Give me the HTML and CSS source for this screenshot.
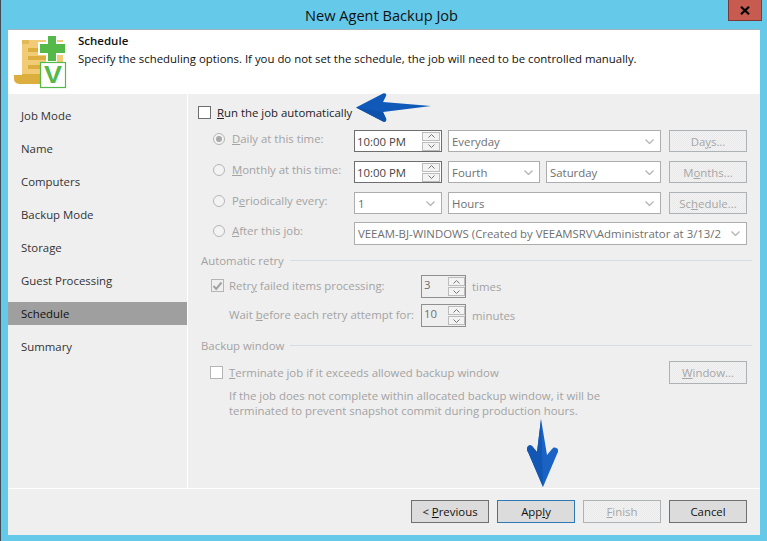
FILE: index.html
```html
<!DOCTYPE html>
<html lang="en">
<head>
<meta charset="utf-8">
<title>New Agent Backup Job</title>
<link rel="stylesheet" href="styles.css">
</head>
<body>
<div class="app">
  <div class="titlebar">
    <span class="title">New Agent Backup Job</span>
    <button class="close" aria-label="Close"><svg width="10" height="9" viewBox="0 0 10 9"><path d="M1 .8 9 8.2M9 .8 1 8.2" stroke="#000" stroke-width="2.2" fill="none"/></svg></button>
  </div>
  <div class="window">
    <header class="header">
      <svg class="logo" width="56" height="56" viewBox="0 0 56 56">
        <path d="M8 9a4 4 0 0 1 4-4h37v35H8z" fill="#f1cb76"/>
        <path d="M8 5h7v4H8z" fill="#e3b957"/>
        <path d="M0 40h8v-1h32v10H5a5 5 0 0 1-5-5z" fill="#dcae3e"/>
        <path d="M14 13h18v4H14zM14 21h18v4H14zM14 30h18v4H14z" fill="#dcae3e"/>
        <path d="M33 0h9v8h9v11h-9v8h-9v-8h-8V8h8z" fill="#fff" stroke="#fff" stroke-width="2"/>
        <path d="M34 1h8v8h9v9h-9v8h-8v-8h-8V9h8z" fill="#54b948"/>
        <rect x="26.500" y="27.500" width="25" height="25" fill="#fff" stroke="#54b948" stroke-width="1.200"/>
        <text x="30" y="48" class="logo-v" textLength="18" lengthAdjust="spacingAndGlyphs">V</text>
      </svg>
      <div class="intro">
        <h1>Schedule</h1>
        <p>Specify the scheduling options. If you do not set the schedule, the job will need to be controlled manually.</p>
      </div>
    </header>
    <div class="main">
      <nav class="nav">
        <a>Job Mode</a><a>Name</a><a>Computers</a><a>Backup Mode</a><a>Storage</a><a>Guest Processing</a><a class="active">Schedule</a><a>Summary</a>
      </nav>
      <section class="panel">
        <div class="run-row"><span class="check"></span><span class="run-label"><u>R</u>un the job automatically</span></div>

        <div class="schedule">
          <div class="row">
            <span class="opt"><span class="radio on"></span><span><u>D</u>aily at this time:</span></span>
            <div class="spin time"><span class="val">10:00 PM</span><span class="arrows"><i><svg width="7" height="4" viewBox="0 0 7 4"><path d="M.5 3.500 3.500.5l3 3" /></svg></i><i><svg width="7" height="4" viewBox="0 0 7 4"><path d="M.5.5l3 3 3-3" /></svg></i></span></div>
            <div class="select w-wide"><span class="val">Everyday</span><svg class="chev" width="9" height="5" viewBox="0 0 9 5"><path d="M.5.5l4 4 4-4"/></svg></div>
            <button class="btn off">Da<u>y</u>s...</button>
          </div>
          <div class="row">
            <span class="opt"><span class="radio"></span><span><u>M</u>onthly at this time:</span></span>
            <div class="spin time"><span class="val">10:00 PM</span><span class="arrows"><i><svg width="7" height="4" viewBox="0 0 7 4"><path d="M.5 3.500 3.500.5l3 3" /></svg></i><i><svg width="7" height="4" viewBox="0 0 7 4"><path d="M.5.5l3 3 3-3" /></svg></i></span></div>
            <div class="select w-mid"><span class="val">Fourth</span><svg class="chev" width="9" height="5" viewBox="0 0 9 5"><path d="M.5.5l4 4 4-4"/></svg></div>
            <div class="select w-sat"><span class="val">Saturday</span><svg class="chev" width="9" height="5" viewBox="0 0 9 5"><path d="M.5.5l4 4 4-4"/></svg></div>
            <button class="btn off">M<u>o</u>nths...</button>
          </div>
          <div class="row">
            <span class="opt"><span class="radio"></span><span>P<u>e</u>riodically every:</span></span>
            <div class="select w-time"><span class="val">1</span><svg class="chev" width="9" height="5" viewBox="0 0 9 5"><path d="M.5.5l4 4 4-4"/></svg></div>
            <div class="select w-wide"><span class="val">Hours</span><svg class="chev" width="9" height="5" viewBox="0 0 9 5"><path d="M.5.5l4 4 4-4"/></svg></div>
            <button class="btn off">Sc<u>h</u>edule...</button>
          </div>
          <div class="row row-job">
            <span class="opt"><span class="radio"></span><span><u>A</u>fter this job:</span></span>
            <div class="select w-job"><span class="val">VEEAM-BJ-WINDOWS (Created by VEEAMSRV\Administrator at 3/13/2</span><svg class="chev" width="9" height="5" viewBox="0 0 9 5"><path d="M.5.5l4 4 4-4"/></svg></div>
          </div>
        </div>

        <div class="legend legend-retry"><span>Automatic retry</span></div>
        <div class="retry-row first">
          <span class="check small checked"><svg width="11" height="10" viewBox="0 0 11 10"><path d="M1.500 5l2.700 3L9.500 1.500"/></svg></span>
          <span class="retry-label">Retr<u>y</u> failed items processing:</span>
          <div class="spin count"><span class="val">3</span><span class="arrows"><i><svg width="7" height="4" viewBox="0 0 7 4"><path d="M.5 3.500 3.500.5l3 3" /></svg></i><i><svg width="7" height="4" viewBox="0 0 7 4"><path d="M.5.5l3 3 3-3" /></svg></i></span></div>
          <span class="unit">times</span>
        </div>
        <div class="retry-row second">
          <span class="check-gap"></span>
          <span class="retry-label">Wait <u>b</u>efore each retry attempt for:</span>
          <div class="spin count"><span class="val">10</span><span class="arrows"><i><svg width="7" height="4" viewBox="0 0 7 4"><path d="M.5 3.500 3.500.5l3 3" /></svg></i><i><svg width="7" height="4" viewBox="0 0 7 4"><path d="M.5.5l3 3 3-3" /></svg></i></span></div>
          <span class="unit">minutes</span>
        </div>

        <div class="legend legend-window"><span>Backup window</span></div>
        <div class="window-row">
          <span class="check small"></span>
          <span class="terminate"><u>T</u>erminate job if it exceeds allowed backup window</span>
          <button class="btn off"><u>W</u>indow...</button>
        </div>
        <p class="help">If the job does not complete within allocated backup window, it will be<br>terminated to prevent snapshot commit during production hours.</p>
      </section>
    </div>
    <footer class="footer">
      <button class="btn">&lt; <u>P</u>revious</button>
      <button class="btn primary">App<u>l</u>y</button>
      <button class="btn off"><u>F</u>inish</button>
      <button class="btn">Cancel</button>
    </footer>
  </div>
</div>
<svg class="arrow arrow-right" width="76" height="32" viewBox="0 0 76 32"><path d="M0 15.500 27 1.500c2-1 4 .5 3 2.500l-3 6L75 14 27 20l3 6.500c1 2.500-1 4-3 3z" fill="#1159b8"/><path d="M0 15.500 27 20l3 6.500c1 2.500-1 4-3 3z" fill="#0f52ab"/></svg>
<svg class="arrow arrow-down" width="33" height="69" viewBox="0 0 33 69"><path d="M15 0 11 33 6 27c-2-2-5 0-5 3 0 1 0 2 1 3l15 35 14-33c2-3 1-6-1-6-2-1-3 0-4 1l-5 6z" fill="#1a63c4"/><path d="M15 0 11 33 6 27c-2-2-5 0-5 3 0 1 0 2 1 3l15 35z" fill="#1157b3"/></svg>
</body>
</html>
```
FILE: styles.css
```css
* { box-sizing: border-box; }
html, body { margin: 0; padding: 0; height: 100%; }
body {
  width: 767px;
  height: 541px;
  overflow: hidden;
  position: relative;
  background: #65c9ea;
  font-family: "Open Sans", "Noto Sans", sans-serif;
  font-size: 11.4px;
  color: #222;
}
.app {
  height: 541px;
  display: flex;
  flex-direction: column;
  border-left: 1px solid #3d4c55;
}
.titlebar {
  height: 29px;
  flex: none;
  display: flex;
  align-items: center;
  justify-content: center;
  position: relative;
}
.title { font-size: 14.6px; color: #111; margin-right: 5px; }
.close {
  position: absolute;
  top: 0;
  right: 5px;
  width: 34px;
  height: 21px;
  padding: 0;
  display: flex;
  align-items: center;
  justify-content: center;
  background: #c75b50;
  border: 1px solid #7b3a36;
  border-top: 0;
}
.window {
  flex: 1;
  margin: 0 7px 6px 7px;
  background: #efefef;
  display: flex;
  flex-direction: column;
  min-height: 0;
}
.header {
  height: 65px;
  flex: none;
  background: #fff;
  border-top: 1px solid #9fb4bd;
  display: flex;
}
.logo { flex: none; margin: 5px 0 0 6px; }
.logo-v { font: bold 23px "Liberation Sans", sans-serif; fill: #54b948; }
.intro { margin-left: 8px; padding-top: 3px; }
.intro h1 { margin: 0; font-size: 11.5px; line-height: 15px; font-weight: 600; color: #111; }
.intro p { margin: 2px 0 0; line-height: 17px; color: #111; }
.main { flex: 1; display: flex; min-height: 0; }
.nav {
  width: 180px;
  flex: none;
  border-right: 1px solid #fff;
  padding-top: 10px;
  display: flex;
  flex-direction: column;
  gap: 10px;
}
.nav a {
  height: 23px;
  display: flex;
  align-items: center;
  padding-left: 13px;
  color: #333;
}
.nav a.active { background: #9f9f9f; color: #111; }
.panel { flex: 1; padding: 0 0 0 10px; color: #a3a3a3; min-width: 0; }
.run-row { margin-top: 10px; height: 17px; display: flex; align-items: center; gap: 6px; color: #222; }
.check {
  width: 13px;
  height: 13px;
  flex: none;
  background: #fff;
  border: 1px solid #6e6e6e;
  display: flex;
  align-items: center;
  justify-content: center;
}
.check.small { border-color: #b5b5b5; }
.check.checked { background: #efefef; }
.check svg path { fill: none; stroke: #a3a3a3; stroke-width: 2; }
.run-label { color: #222; }
.schedule { margin: 9px 0 0 15px; display: flex; flex-direction: column; gap: 9px; }
.row { height: 22px; display: flex; align-items: flex-start; }
.row-job { height: 23px; margin-top: -1px; }
.opt { width: 141px; height: 17px; flex: none; display: flex; align-items: center; gap: 7px; }
.radio {
  width: 12px;
  height: 12px;
  flex: none;
  border: 1px solid #b5b5b5;
  border-radius: 50%;
  background: #f3f3f3;
  display: flex;
  align-items: center;
  justify-content: center;
}
.radio.on::after { content: ""; width: 6px; height: 6px; border-radius: 50%; background: #a9a9a9; }
.select, .spin {
  height: 100%;
  background: #fff;
  border: 1px solid #adadad;
  display: flex;
  align-items: center;
  color: #6f6f6f;
  overflow: hidden;
  flex: none;
}
.val { flex: 1; min-width: 0; padding-left: 3px; white-space: nowrap; overflow: hidden; }
.chev { flex: none; margin: 0 6px 0 8px; }
.chev path { fill: none; stroke: #b4b4b4; stroke-width: 1.3; }
.w-time { width: 88px; }
.w-wide { width: 213px; margin-left: 6px; }
.w-mid { width: 92px; margin-left: 6px; }
.w-sat { width: 115px; margin-left: 6px; }
.w-job { width: 393px; }
.time { width: 88px; border-color: #6e6e6e; color: #444; }
.time .val { padding-left: 2px; }
.arrows { width: 18px; flex: none; display: flex; flex-direction: column; gap: 1px; margin-right: 1px; }
.arrows i {
  height: 9px;
  display: flex;
  align-items: center;
  justify-content: center;
  background: #f3f3f3;
  border: 1px solid #bcbcbc;
}
.arrows svg path { fill: none; stroke: #777; stroke-width: 1; }
.btn {
  width: 78px;
  height: 23px;
  flex: none;
  padding: 0;
  font: inherit;
  color: #111;
  background: #dcdcdc;
  border: 1px solid #707070;
}
.btn.primary { border-color: #2e78b5; }
.btn.off {
  color: #a6a6a6;
  border-color: #adb2b5;
  background: repeating-conic-gradient(#e8e8e8 0 25%, #f4f4f4 0 50%) 0 0 / 2px 2px;
}
.row .btn { height: 22px; margin-left: 8px; }
.legend { display: flex; align-items: center; gap: 6px; margin-left: 3px; margin-right: 8px; height: 16px; }
.legend::after { content: ""; flex: 1; height: 1px; background: #d3dde3; }
.legend-retry { margin-top: 7px; }
.legend-window { margin-top: 10px; }
.retry-row { display: flex; height: 23px; }
.retry-row.first { margin-top: 7px; }
.retry-row.second { margin-top: 6px; }
.retry-row > .check, .check-gap { width: 13px; flex: none; margin: 4px 5px 0 13px; height: 13px; }
.check-gap { height: 1px; }
.retry-label { width: 192px; flex: none; height: 21px; line-height: 21px; }
.spin.count { width: 45px; background: #efefef; border-color: #8f8f8f; align-items: flex-start; }
.spin.count .val { padding: 1px 0 0 2px; }
.spin.count .arrows { margin-top: 1px; margin-right: 0; width: 17px; }
.unit { margin-left: 6px; line-height: 24px; }
.window-row { margin-top: 8px; height: 23px; display: flex; align-items: center; }
.window-row .check { margin: 0 6px 0 12px; }
.terminate { flex: 1; margin-top: -1px; }
.window-row .btn { margin-right: 13px; }
.help { margin: 4px 0 0 31px; line-height: 15px; }
.footer {
  height: 47px;
  flex: none;
  border-top: 1px solid #fff;
  padding: 11px 13px 0 0;
  display: flex;
  justify-content: flex-end;
  gap: 8px;
}
.arrow { position: absolute; }
.arrow-right { left: 356px; top: 92px; }
.arrow-down { left: 526px; top: 419px; }
```
